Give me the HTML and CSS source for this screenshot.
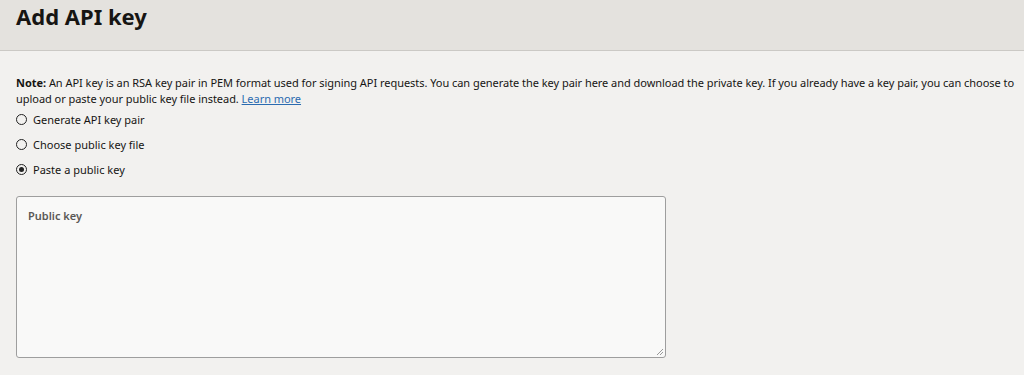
FILE: index.html
```html
<!DOCTYPE html>
<html lang="en">
<head>
    <meta charset="UTF-8">
    <title>Add API key</title>
    <link rel="stylesheet" href="styles.css">
</head>
<body>
    <div class="panel-header">
        <h1>Add API key</h1>
    </div>
    <div class="panel-body">
        <p class="note"><b>Note:</b> An API key is an RSA key pair in PEM format used for signing API requests. You can generate the key pair here and download the private key. If you already have a key pair, you can choose to upload or paste your public key file instead. <a href="#">Learn more</a></p>
        <div class="radio-group">
            <label class="radio"><span class="dot"></span>Generate API key pair</label>
            <label class="radio"><span class="dot"></span>Choose public key file</label>
            <label class="radio"><span class="dot checked"></span>Paste a public key</label>
        </div>
        <div class="key-field">
            <span class="field-label">Public key</span>
            <svg class="grip" width="8" height="8" viewBox="0 0 8 8"><path d="M7 1L1 7M7 4L4 7" stroke="#999" stroke-width="1"/></svg>
        </div>
    </div>
</body>
</html>
```

FILE: styles.css
```css
body { margin: 0; background: #f2f1ef; font-family: "Noto Sans", "Open Sans", sans-serif; color: #161513; }
.panel-header { background: #e4e2de; height: 50px; border-bottom: 1px solid #cbc9c5; padding: 0 16px; display: flex; align-items: center; }
.panel-header h1 { margin: 0; font-size: 22px; font-weight: 700; margin-top: -18px; }
.panel-body { padding: 24px 4px 24px 16px; }
.note { margin: 0; font-size: 11px; line-height: 15.5px; letter-spacing: -0.04px; }
.note a { color: #2b6bb0; text-decoration: underline; }
.radio-group { display: flex; flex-direction: column; gap: 9px; margin-top: 5px; }
.radio { display: flex; align-items: center; font-size: 11px; height: 16px; }
.dot { width: 9px; height: 9px; border: 1px solid #222; border-radius: 50%; margin-right: 6px; display: flex; align-items: center; justify-content: center; }
.dot.checked::after { content: ""; width: 5px; height: 5px; background: #222; border-radius: 50%; }
.key-field { position: relative; margin-top: 19px; width: 648px; height: 160px; background: #f9f9f8; border: 1px solid #9e9e9e; border-radius: 3px; }
.field-label { position: absolute; left: 11px; top: 11px; font-size: 11px; font-weight: 600; color: #5a5856; }
.grip { position: absolute; right: 1px; bottom: 1px; }
```
